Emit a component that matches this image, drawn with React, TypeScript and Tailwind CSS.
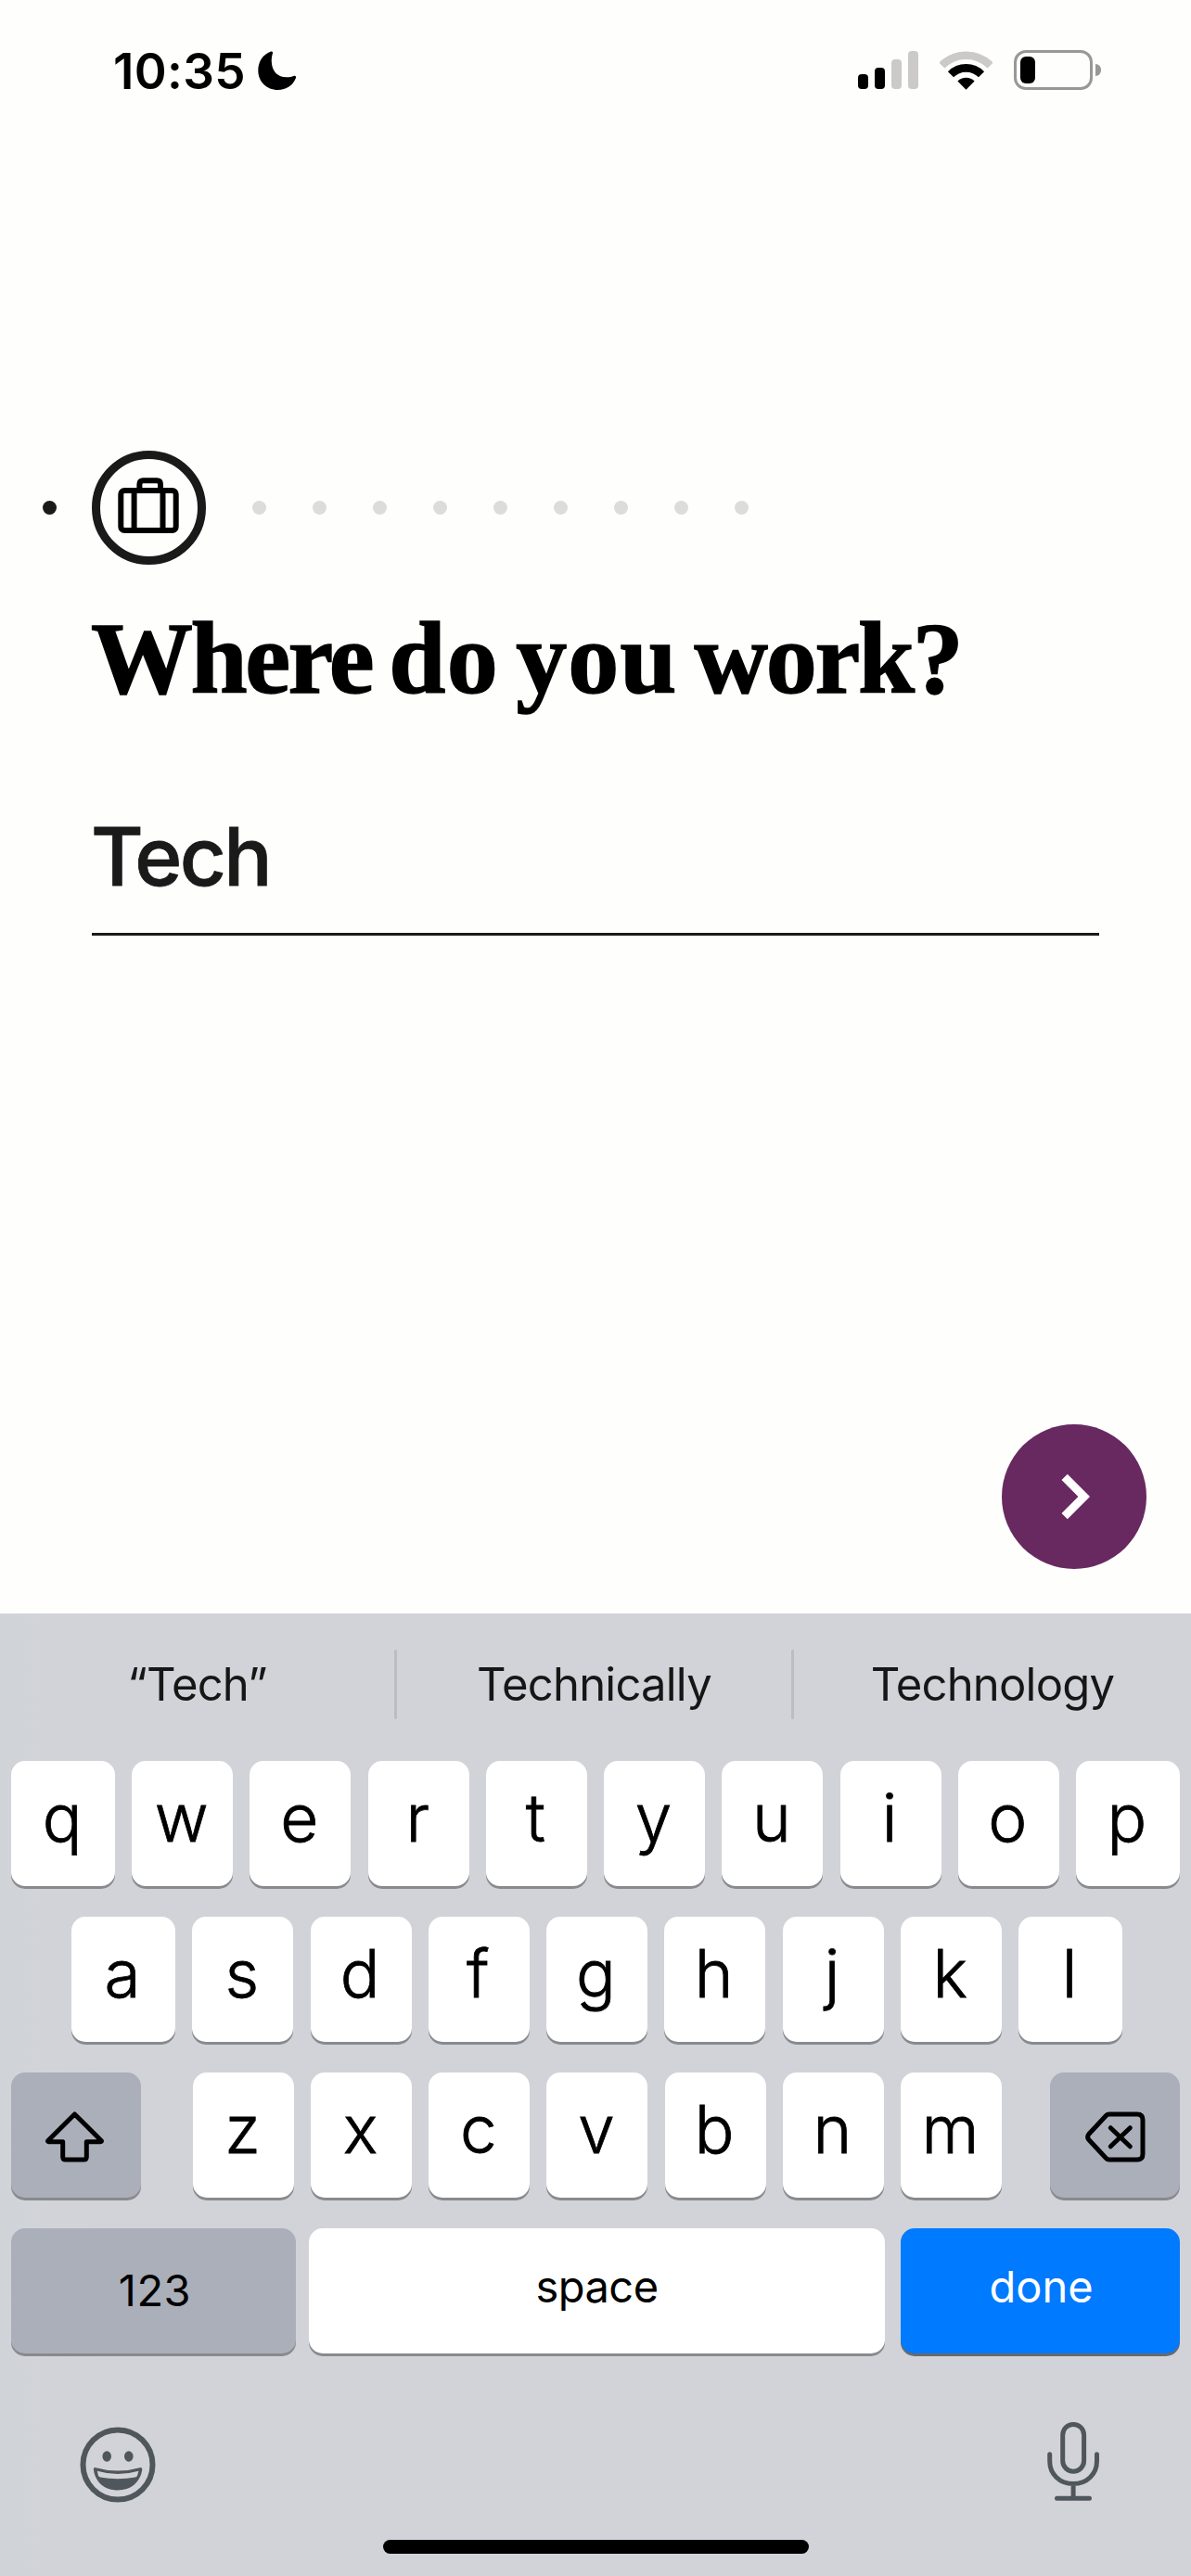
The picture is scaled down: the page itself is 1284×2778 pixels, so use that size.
import React from "react";

const KEY_BASE =
  "flex items-center justify-center h-[135px] rounded-[15px] shadow-[0_3px_0_#898a8e] text-black";

function LetterKey({ label, wide = false }: { label: string; wide?: boolean }) {
  return (
    <div
      className={`${KEY_BASE} bg-white pr-[2px] pb-[13px] text-[71px] leading-none font-light [-webkit-text-stroke:0.8px_black] ${
        wide ? "w-[112px]" : "w-[109px]"
      }`}
    >
      {label}
    </div>
  );
}

function MoonIcon() {
  return (
    <svg width="42" height="43" viewBox="0 0 42 43" className="-mt-px ml-[13px]">
      <path d="M14 .6C15.3 0 16.5 .9 16 2.3C15 5.5 14.6 9 14.8 12C15.3 22 21.5 28.3 31 28.3C34 28.3 36.5 27.8 39 26.8C40.5 26.3 41.5 27.4 41 29C38 37 30.5 42 21.5 42C9.5 42 .3 33 .3 21C.3 11.5 5.5 3.8 14 .6Z" />
    </svg>
  );
}

function StatusBar() {
  return (
    <div className="flex h-[154px] items-center justify-between pr-[97px] pl-[122px] text-black">
      <div className="flex items-center">
        <span className="text-[53px] leading-none font-semibold tracking-[0.3px]">10:35</span>
        <MoonIcon />
      </div>
      <div className="-mt-[3px] flex items-center">
        <div className="flex h-[41px] items-end gap-[7px]">
          <div className="h-4 w-[11px] rounded-[4px] bg-black" />
          <div className="h-[23px] w-[11px] rounded-[4px] bg-black" />
          <div className="h-8 w-[11px] rounded-[4px] bg-[#cbcac9]" />
          <div className="h-[41px] w-[11px] rounded-[4px] bg-[#cbcac9]" />
        </div>
        <svg width="57" height="42" viewBox="0 0 57 42" fill="none" className="ml-[23px]">
          <path d="M2.3 15.5A37 37 0 0 1 54.7 15.5" stroke="#cbcac9" strokeWidth="8.5" />
          <path d="M12 25.2A23.3 23.3 0 0 1 45 25.2" stroke="#000" strokeWidth="8.7" />
          <path d="M19.4 32.4A13.2 13.2 0 0 1 37.6 32.4L28.5 41.7Z" fill="#000" />
        </svg>
        <div className="ml-[23px] h-[43px] w-[85px] rounded-[13px] border-[3px] border-[#999897] p-1">
          <div className="h-[29px] w-4 rounded-[6px] bg-black" />
        </div>
        <div className="ml-[3px] h-[13px] w-[6px] rounded-r-full bg-[#999897]" />
      </div>
    </div>
  );
}

function Stepper() {
  return (
    <div className="mt-[332px] flex h-[123px] items-center pl-[46px]">
      <div className="size-[15px] rounded-full bg-[#1a1a1a]" />
      <div className="ml-[38px] flex size-[123px] items-center justify-center rounded-full border-[9px] border-[#1a1a1a]">
        <svg
          width="66"
          height="60"
          viewBox="0 0 66 60"
          fill="none"
          stroke="#000"
          strokeWidth="6"
          className="-mt-[5px] -ml-px"
        >
          <rect x="3.3" y="14" width="59.4" height="43" rx="4" />
          <path d="M23.4 14V7.2Q23.4 3.2 27.4 3.2H42Q46 3.2 46 7.2V14M17.6 14V57M48.5 14V57" />
        </svg>
      </div>
      <div className="ml-[50px] flex gap-[50px]">
        {Array.from({ length: 9 }, (_, i) => (
          <div key={i} className="size-[15px] rounded-full bg-[#dcdcdc]" />
        ))}
      </div>
    </div>
  );
}

function Keyboard() {
  return (
    <div className="mt-12 flex flex-1 flex-col bg-[#d2d3d8] bg-linear-to-r from-[#d0d4d8] from-0% via-[#d2d3d8] via-8% to-[#d2d3d8]">
      <div className="mb-[7px] flex h-[152px] items-center text-[49px] leading-none tracking-[-0.8px] text-[#161616]">
        <div className="w-[425px] text-center">“Tech”</div>
        <div className="h-[75px] w-[3px] rounded-full bg-[#bcbdc2]" />
        <div className="w-[425px] text-center">Technically</div>
        <div className="h-[75px] w-[3px] rounded-full bg-[#bcbdc2]" />
        <div className="flex-1 text-center">Technology</div>
      </div>

      <div className="flex flex-col gap-[33px] px-3">
        <div className="flex justify-between">
          {"qwertyuiop".split("").map((k) => (
            <LetterKey key={k} label={k} wide={k === "q" || k === "p"} />
          ))}
        </div>
        <div className="flex justify-between pr-[62px] pl-[65px]">
          {"asdfghjkl".split("").map((k) => (
            <LetterKey key={k} label={k} wide={k === "a" || k === "l"} />
          ))}
        </div>
        <div className="flex">
          <div className={`${KEY_BASE} w-[140px] bg-[#abafba]`}>
            <svg
              width="66"
              height="58"
              viewBox="1 -1.5 66 58"
              fill="none"
              stroke="#000"
              strokeWidth="5"
              strokeLinejoin="round"
            >
              <path d="M32.5 4.5L3.6 33.2Q3.3 34.2 4.5 34.2H19.7V50.5Q19.7 53.5 22.7 53.5H42.3Q45.3 53.5 45.3 50.5V34.2H60.5Q61.7 34.2 61.4 33.2Z" />
            </svg>
          </div>
          <div className="mr-[52px] ml-14 flex flex-1 justify-between">
            {"zxcvbnm".split("").map((k) => (
              <LetterKey key={k} label={k} />
            ))}
          </div>
          <div className={`${KEY_BASE} w-[140px] bg-[#abafba]`}>
            <svg
              width="70"
              height="58"
              viewBox="-1 -1.5 70 58"
              fill="none"
              stroke="#000"
              strokeWidth="5"
              strokeLinecap="round"
              strokeLinejoin="round"
            >
              <path d="M28 4.5H58Q64 4.5 64 10.5V47.5Q64 53.5 58 53.5H28Q25.5 53.5 24 51.5L5.8 32Q3.5 29 5.8 26L24 6.5Q25.5 4.5 28 4.5Z" />
              <path d="M29.3 19.2L50.3 39.3M50.3 19.2L29.3 39.3" />
            </svg>
          </div>
        </div>
        <div className="flex text-[47px] leading-none">
          <div className={`${KEY_BASE} w-[307px] bg-[#abafba] pb-[2px] pl-[3px] tracking-[0.5px]`}>
            123
          </div>
          <div className={`${KEY_BASE} ml-[14px] w-[621px] bg-white pb-[11px] tracking-[-0.5px]`}>
            space
          </div>
          <div className="ml-[17px] flex h-[135px] w-[301px] items-center justify-center rounded-[15px] bg-[#007aff] pb-[11px] pl-[2px] text-white shadow-[0_3px_0_#68696e]">
            done
          </div>
        </div>
      </div>

      <div className="mt-[73px] flex h-[88px] items-center justify-between pr-[98px] pl-[86px] text-[#50575c]">
        <svg width="82" height="82" viewBox="0 0 82 82" className="mt-[5px]">
          <circle cx="41" cy="41" r="37.5" fill="none" stroke="currentColor" strokeWidth="6" />
          <ellipse cx="29.2" cy="32" rx="4.8" ry="5.7" fill="currentColor" />
          <ellipse cx="52.8" cy="32" rx="4.8" ry="5.7" fill="currentColor" />
          <path
            fill="currentColor"
            fillRule="evenodd"
            d="M17.5 44.2Q41 51 64.5 44.2Q67.7 43.5 67.2 47C65 60 55 68.5 41 68.5C27 68.5 17 60 15 47Q14.3 43.5 17.5 44.2ZM18.8 47.8Q41 54.3 63.4 47.8L62 53Q61.5 54 60 54.4Q41 58 22 54.4Q20.5 54 20 53Z"
          />
        </svg>
        <svg
          width="58"
          height="88"
          viewBox="0 0 58 88"
          fill="none"
          stroke="currentColor"
          strokeWidth="5"
          strokeLinecap="round"
        >
          <rect x="17.7" y="3.5" width="22.9" height="50.7" rx="11.4" />
          <path d="M3.7 35.8V43C3.7 57 14 67.6 29.1 67.6C44 67.6 54.5 57 54.5 43V35.8M29.1 67.6V83M11.5 83.3H46.5" />
        </svg>
      </div>
      <div className="mt-10 h-[15px] w-[459px] self-center rounded-full bg-black" />
    </div>
  );
}

export default function App() {
  return (
    <div className="flex h-[2778px] w-[1284px] flex-col overflow-hidden bg-[#fefefd] font-['Inter',sans-serif]">
      <StatusBar />
      <Stepper />
      <h1 className="mt-[41px] ml-[98px] h-[120px] font-['Liberation_Serif',serif] text-[110px] leading-[121px] font-bold whitespace-nowrap text-black [-webkit-text-stroke:1.4px_black] [word-spacing:-9.5px]">
        <span className="tracking-[-2.5px]">Where</span> <span className="tracking-[1.5px]">do</span>{" "}
        <span className="tracking-[1px]">you</span> <span className="tracking-[-2.3px]">work?</span>
      </h1>
      <div className="mt-[102px] mr-[99px] ml-[99px] border-b-[3px] border-[#1a1a1a] pb-[32px]">
        <div className="-ml-px h-[102px] text-[87px] leading-[104px] font-medium tracking-[-2.7px] text-[#1a1a1a] [-webkit-text-stroke:0.8px_#1a1a1a]">
          Tech
        </div>
      </div>
      <button className="mt-[527px] mr-12 flex size-[156px] shrink-0 items-center justify-center self-end rounded-full bg-[#67295f]">
        <svg width="32" height="50" viewBox="0 0 32 50" className="ml-[3px]">
          <path d="M6.8 .7L31 25L6.8 49.2L.5 42.9L18.4 25L.5 7Z" fill="#fff" />
        </svg>
      </button>
      <Keyboard />
    </div>
  );
}
